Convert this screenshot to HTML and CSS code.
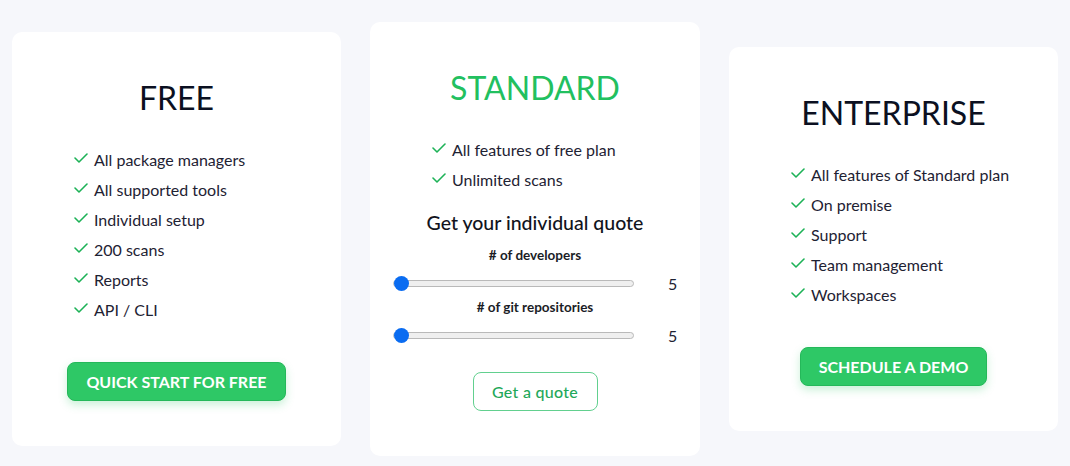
FILE: index.html
```html
<!DOCTYPE html>
<html>
<head>
<meta charset="utf-8">
<link rel="stylesheet" href="styles.css">
</head>
<body>
<svg width="0" height="0" style="position:absolute">
  <defs>
    <symbol id="chk" viewBox="0 0 14 10"><polyline points="1,5 5,9 13,1" fill="none" stroke="#1db257" stroke-width="1.6" stroke-linecap="round" stroke-linejoin="round"/></symbol>
  </defs>
</svg>
<main class="plans">
  <section class="card">
    <h2 class="title">FREE</h2>
    <ul class="features">
      <li><svg class="check"><use href="#chk"/></svg>All package managers</li>
      <li><svg class="check"><use href="#chk"/></svg>All supported tools</li>
      <li><svg class="check"><use href="#chk"/></svg>Individual setup</li>
      <li><svg class="check"><use href="#chk"/></svg>200 scans</li>
      <li><svg class="check"><use href="#chk"/></svg>Reports</li>
      <li><svg class="check"><use href="#chk"/></svg>API / CLI</li>
    </ul>
    <button class="btn btn-solid">QUICK START FOR FREE</button>
  </section>

  <section class="card">
    <h2 class="title title-green">STANDARD</h2>
    <ul class="features">
      <li><svg class="check"><use href="#chk"/></svg>All features of free plan</li>
      <li><svg class="check"><use href="#chk"/></svg>Unlimited scans</li>
    </ul>
    <h3 class="quote-title">Get your individual quote</h3>
    <div class="field-label first">#&nbsp;of developers</div>
    <div class="slider-row">
      <div class="track"><span class="thumb"></span></div>
      <span class="value">5</span>
    </div>
    <div class="field-label">#&nbsp;of git repositories</div>
    <div class="slider-row">
      <div class="track"><span class="thumb"></span></div>
      <span class="value">5</span>
    </div>
    <button class="btn btn-outline">Get a quote</button>
  </section>

  <section class="card">
    <h2 class="title">ENTERPRISE</h2>
    <ul class="features">
      <li><svg class="check"><use href="#chk"/></svg>All features of Standard plan</li>
      <li><svg class="check"><use href="#chk"/></svg>On premise</li>
      <li><svg class="check"><use href="#chk"/></svg>Support</li>
      <li><svg class="check"><use href="#chk"/></svg>Team management</li>
      <li><svg class="check"><use href="#chk"/></svg>Workspaces</li>
    </ul>
    <button class="btn btn-solid">SCHEDULE A DEMO</button>
  </section>
</main>
</body>
</html>
```

FILE: styles.css
```css
* { box-sizing: border-box; }

html, body {
  margin: 0;
  padding: 0;
  background: #f6f7fb;
  font-family: "Lato", "Open Sans", sans-serif;
  color: #1b1f2e;
}

.plans {
  height: 466px;
  padding: 12px 12px 0;
  display: flex;
  align-items: center;
  gap: 29px;
}

.card {
  width: 329px;
  flex: 0 0 329px;
  background: #ffffff;
  border-radius: 10px;
  padding: 46px 22px 45px;
  display: flex;
  flex-direction: column;
}

.card:nth-child(2) { flex-basis: 330px; width: 330px; }

.title {
  margin: 0 0 26px;
  font-size: 32px;
  line-height: 40px;
  font-weight: 400;
  text-align: center;
  color: #0b1021;
}

.title-green { color: #22c05f; }

.features {
  list-style: none;
  margin: 0;
  padding: 0 0 0 40px;
}

.features li {
  height: 30px;
  display: flex;
  align-items: center;
  font-size: 16px;
  color: #1e2233;
}

.features li:last-child { margin-bottom: 1px; }

.check {
  width: 14px;
  height: 10px;
  margin-right: 6px;
  margin-top: -3px;
  flex: 0 0 14px;
}

.btn {
  align-self: center;
  height: 39px;
  border-radius: 8px;
  font-family: inherit;
  font-size: 16px;
  cursor: pointer;
}

.btn-solid {
  margin-top: 37px;
  padding: 0 18px;
  background: #2ec866;
  border: 1px solid #25b85a;
  color: #ffffff;
  font-weight: 700;
  letter-spacing: 0;
  box-shadow: 0 4px 8px rgba(46, 200, 102, 0.25);
}

.btn-outline {
  margin-top: 27px;
  width: 125px;
  background: #ffffff;
  border: 1.5px solid #62d08f;
  color: #1fa85a;
  font-weight: 500;
  letter-spacing: 0.3px;
}

.quote-title {
  margin: 15px 0 0;
  font-size: 19.5px;
  line-height: 26px;
  font-weight: 500;
  text-align: center;
  color: #12141d;
}

.field-label {
  margin: 5px 0 9px;
  font-size: 13.5px;
  line-height: 18px;
  font-weight: 700;
  text-align: center;
  color: #1b1d26;
}

.field-label.first { margin-top: 10px; }

.slider-row {
  height: 20px;
  display: flex;
  align-items: center;
  padding-left: 1px;
}

.track {
  position: relative;
  width: 241px;
  height: 7px;
  border-radius: 4px;
  background: #efefef;
  border: 1px solid #b9b9b9;
}

.thumb {
  position: absolute;
  left: 0;
  top: 50%;
  width: 15px;
  height: 15px;
  margin-top: -7.5px;
  border-radius: 50%;
  background: #0a6cf1;
}

.value {
  margin-left: 34px;
  font-size: 16px;
  color: #1e2233;
}
```
